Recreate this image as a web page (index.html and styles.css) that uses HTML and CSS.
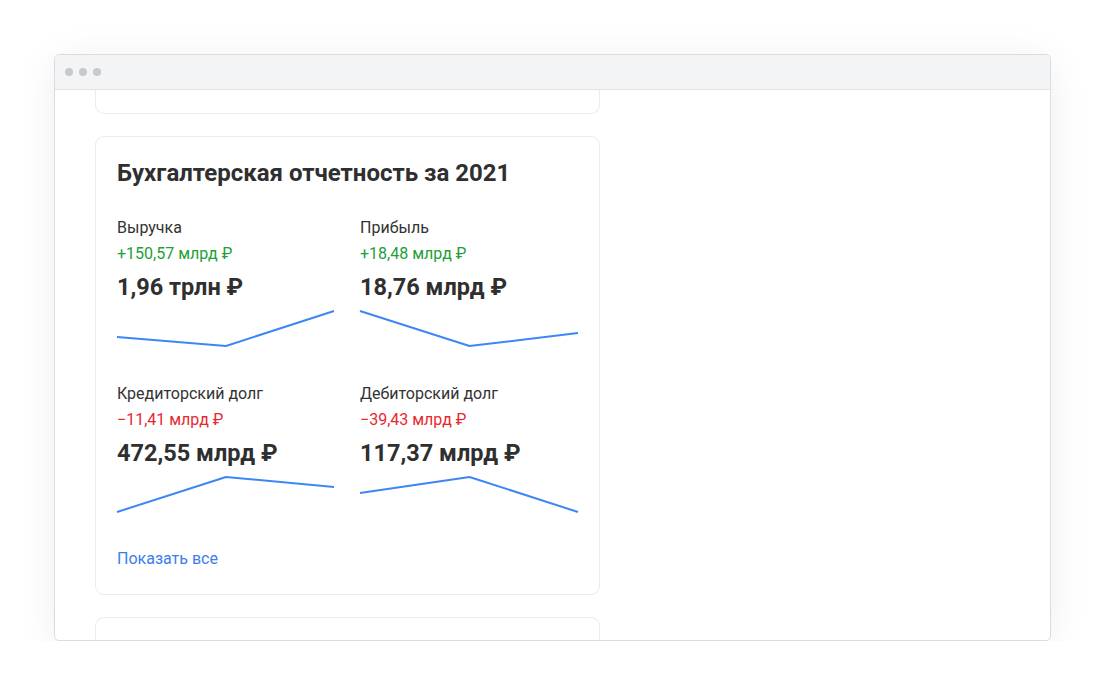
FILE: index.html
```html
<!DOCTYPE html>
<html lang="ru">
<head>
<meta charset="utf-8">
<title>Бухгалтерская отчетность</title>
<link rel="stylesheet" href="styles.css">
</head>
<body>
<div class="window">
  <div class="titlebar">
    <span class="dot"></span><span class="dot"></span><span class="dot"></span>
  </div>
  <div class="viewport">
    <div class="feed">
      <div class="card card-stub"></div>
      <section class="card">
        <h2 class="card-title">Бухгалтерская отчетность за 2021</h2>
        <div class="metrics">
          <div class="metric">
            <div class="metric-label">Выручка</div>
            <div class="metric-delta up">+150,57 млрд ₽</div>
            <div class="metric-value">1,96 трлн ₽</div>
            <svg class="spark" viewBox="0 0 217 37" preserveAspectRatio="none"><polyline points="0,27 109,36 217,1"/></svg>
          </div>
          <div class="metric">
            <div class="metric-label">Прибыль</div>
            <div class="metric-delta up">+18,48 млрд ₽</div>
            <div class="metric-value">18,76 млрд ₽</div>
            <svg class="spark" viewBox="0 0 217 37" preserveAspectRatio="none"><polyline points="0,1 109,36 217,23"/></svg>
          </div>
          <div class="metric">
            <div class="metric-label">Кредиторский долг</div>
            <div class="metric-delta down">−11,41 млрд ₽</div>
            <div class="metric-value">472,55 млрд ₽</div>
            <svg class="spark" viewBox="0 0 217 37" preserveAspectRatio="none"><polyline points="0,36 109,1 217,11"/></svg>
          </div>
          <div class="metric">
            <div class="metric-label">Дебиторский долг</div>
            <div class="metric-delta down">−39,43 млрд ₽</div>
            <div class="metric-value">117,37 млрд ₽</div>
            <svg class="spark" viewBox="0 0 217 37" preserveAspectRatio="none"><polyline points="0,17 109,1 217,36"/></svg>
          </div>
        </div>
        <a class="show-all" href="#">Показать все</a>
      </section>
      <div class="card card-next"></div>
    </div>
  </div>
</div>
</body>
</html>
```
FILE: styles.css
```css
* { box-sizing: border-box; }
html, body { margin: 0; padding: 0; background: #fff; }
body {
  font-family: Roboto, "Noto Sans", "Liberation Sans", sans-serif;
  color: #333;
  padding: 54px 0 0 54px;
}
.window {
  width: 997px;
  height: 587px;
  border: 1px solid #dcdcdc;
  border-radius: 5px;
  background: #fff;
  box-shadow: 0 6px 40px rgba(0, 0, 0, 0.07);
  overflow: hidden;
  display: flex;
  flex-direction: column;
}
.titlebar {
  height: 35px;
  flex: none;
  background: #f3f4f6;
  border-bottom: 1px solid #e2e2e2;
  display: flex;
  align-items: center;
  gap: 6px;
  padding-left: 10px;
}
.dot {
  width: 8px;
  height: 8px;
  border-radius: 50%;
  background: #c9c9cc;
}
.viewport {
  flex: 1;
  overflow: hidden;
  padding-left: 40px;
}
.feed {
  display: flex;
  flex-direction: column;
  gap: 22px;
  width: 505px;
}
.card {
  border: 1px solid #ebebeb;
  border-radius: 9px;
  background: #fff;
}
.card-stub {
  height: 24px;
  border-top: none;
  border-top-left-radius: 0;
  border-top-right-radius: 0;
}
.card-next {
  height: 60px;
}
section.card {
  padding: 22px 21px 23px 21px;
}
.card-title {
  margin: 0 0 28px;
  font-size: 24px;
  line-height: 28px;
  font-weight: 700;
  color: #2f2f2f;
}
.metrics {
  display: grid;
  grid-template-columns: 217px 218px;
  column-gap: 26px;
  row-gap: 34px;
}
.metric {
  display: flex;
  flex-direction: column;
}
.metric-label {
  font-size: 16px;
  line-height: 26px;
  color: #333;
}
.metric-delta {
  font-size: 16px;
  line-height: 26px;
}
.metric-delta.up { color: #21a038; }
.metric-delta.down { color: #e8282e; }
.metric-value {
  margin-top: 5px;
  font-size: 23.5px;
  line-height: 30px;
  font-weight: 700;
  color: #2f2f2f;
}
.spark {
  margin-top: 8px;
  width: 100%;
  height: 37px;
  display: block;
  overflow: visible;
}
.spark polyline {
  fill: none;
  stroke: #3d87f5;
  stroke-width: 2;
  stroke-linejoin: round;
  vector-effect: non-scaling-stroke;
}
.show-all {
  display: inline-block;
  margin-top: 34px;
  font-size: 16px;
  line-height: 24px;
  color: #3b7deb;
  text-decoration: none;
}
```
